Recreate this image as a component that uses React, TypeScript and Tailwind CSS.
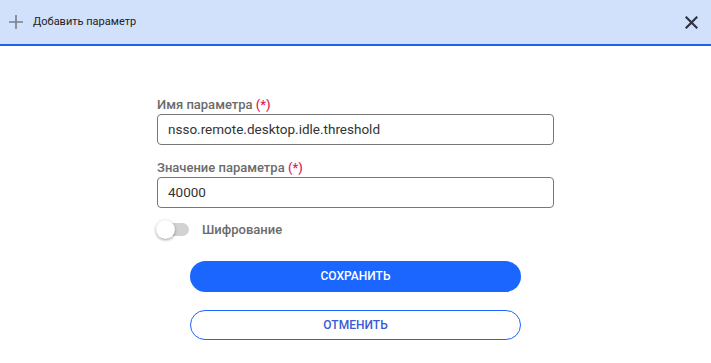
export default function App() {
  return (
    <div className="w-[711px] h-[363px] bg-white font-['Roboto',sans-serif] overflow-hidden">
      {/* Header */}
      <div className="h-[46px] bg-[#d1e0fb] border-b-2 border-[#1d63f0] flex items-center pl-[9px] pr-[13px]">
        <svg width="14" height="14" viewBox="0 0 14 14" className="text-[#7a7f88]">
          <path d="M7 0v14M0 7h14" stroke="currentColor" strokeWidth="1.6" />
        </svg>
        <span className="ml-[10px] text-[11px] text-[#222]">Добавить параметр</span>
        <svg width="13" height="13" viewBox="0 0 13 13" className="ml-auto text-[#2f3440]">
          <path d="M1.5 1.5l10 10M11.5 1.5l-10 10" stroke="currentColor" strokeWidth="2.2" strokeLinecap="square" />
        </svg>
      </div>

      {/* Body */}
      <div className="flex flex-col items-center pt-[51px]">
        <div className="w-[397px] flex flex-col">
          <label className="text-[13px] font-medium text-[#6b6b6b] leading-[16px]">
            Имя параметра <span className="text-[#e0245e]">(*)</span>
          </label>
          <div className="mt-[1px] h-[31px] border border-[#777] rounded-[4px] flex items-center px-[10px] text-[13.5px] text-[#333]">
            nsso.remote.desktop.idle.threshold
          </div>

          <label className="mt-[15px] text-[13px] font-medium text-[#6b6b6b] leading-[16px]">
            Значение параметра <span className="text-[#e0245e]">(*)</span>
          </label>
          <div className="mt-[1px] h-[31px] border border-[#777] rounded-[4px] flex items-center px-[10px] text-[13.5px] text-[#333]">
            40000
          </div>

          <div className="mt-[12px] flex items-center">
            <div className="relative w-[32px] h-[13px] rounded-full bg-[#d2d2d2]">
              <div className="absolute left-[-1px] top-[-3px] w-[19px] h-[19px] rounded-full bg-white shadow-[0_1px_3px_rgba(0,0,0,0.4)]" />
            </div>
            <span className="ml-[13px] text-[13px] font-medium text-[#6b6b6b]">Шифрование</span>
          </div>
        </div>

        <button className="mt-[21px] w-[331px] h-[31px] rounded-full bg-[#1a66ff] text-white text-[12px] font-medium">
          СОХРАНИТЬ
        </button>
        <button className="mt-[18px] w-[331px] h-[30px] rounded-full border border-[#1a66ff] bg-white text-[#3a5ad8] text-[12px] font-medium">
          ОТМЕНИТЬ
        </button>
      </div>
    </div>
  );
}
